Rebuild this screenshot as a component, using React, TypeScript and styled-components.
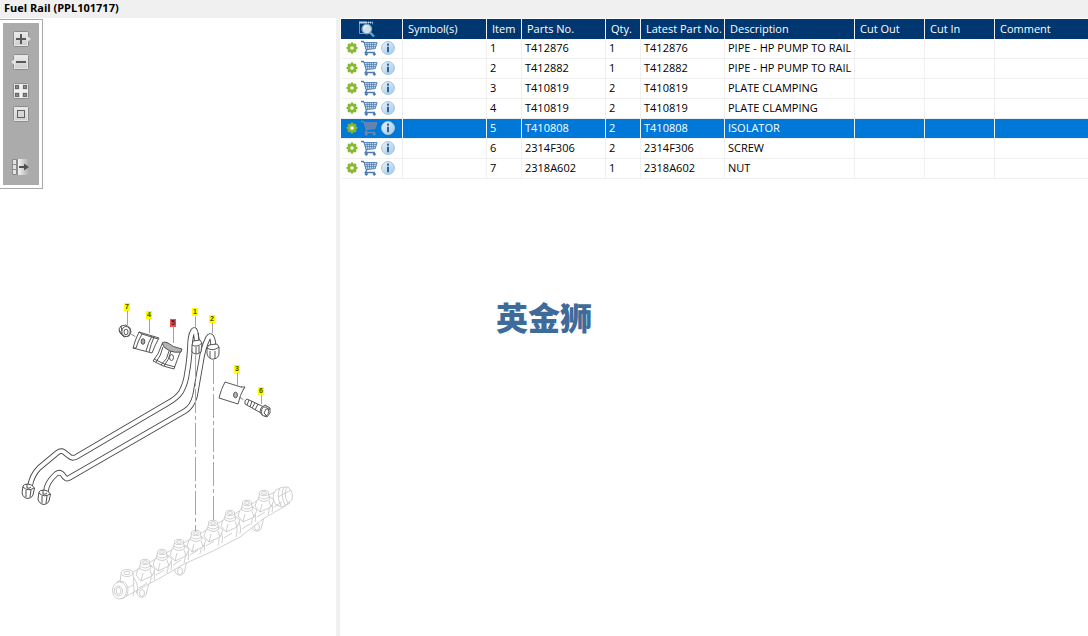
import React, { useState } from 'react';
import styled, { createGlobalStyle } from 'styled-components';

const GlobalStyle = createGlobalStyle`
  * { box-sizing: border-box; }
  body {
    margin: 0;
    background: #fff;
    color: #000;
    font: 11px/16px "Open Sans", "Noto Sans", sans-serif;
  }
`;

const Page = styled.div`
  position: relative;
  display: flex;
  flex-direction: column;
  min-height: 100vh;
`;

const TitleBar = styled.header`
  background: #f0f0f0;
  height: 18px;
  padding: 0 4px;
`;

const Title = styled.h1`
  margin: 0;
  font-size: 11px;
  line-height: 16px;
  font-weight: 700;
`;

const Workspace = styled.main`
  display: flex;
  flex: 1;
`;

const DrawingPane = styled.section`
  flex: 0 0 336px;
  padding-top: 1px;
`;

const Splitter = styled.div`
  flex: 0 0 4px;
  background: #f0f0f0;
`;

const PartsPane = styled.section`
  flex: 1;
  min-width: 0;
  padding: 1px 0 0 1px;
`;

const ToolFrame = styled.div`
  width: 43px;
  border: 1px solid #a9a9a9;
  border-left: 0;
  padding: 3px;
`;

const Tools = styled.div`
  display: flex;
  flex-direction: column;
  align-items: center;
  background: #ababab;
  padding: 6px 0 8px;
`;

const ToolButton = styled.button<{ $gap?: number }>`
  display: block;
  width: 20px;
  height: 20px;
  margin: ${(p) => p.$gap ?? 3}px 0 0;
  padding: 0;
  border: 0;
  background: none;
  svg { display: block; }
`;

const Drawing = styled.svg`
  display: block;
  width: 100%;
  margin-top: 109px;
`;

const Table = styled.table`
  width: 100%;
  table-layout: fixed;
  border-collapse: separate;
  border-spacing: 0;
`;

const Col = styled.col<{ $width?: number }>`
  width: ${(p) => (p.$width ? `${p.$width}px` : 'auto')};
`;

const HeadCell = styled.th`
  height: 20px;
  padding: 0 0 0 5px;
  border-right: 1px solid #f0f0f0;
  background: #003770;
  color: #fff;
  font-weight: 400;
  line-height: 16px;
  text-align: left;
  white-space: nowrap;
  svg { display: block; }
  &:first-child { padding: 0 0 0 17px; }
  &:last-child { border-right: 0; }
`;

const Row = styled.tr<{ $selected: boolean }>`
  background: ${(p) => (p.$selected ? '#0078d7' : '#fff')};
  color: ${(p) => (p.$selected ? '#fff' : '#000')};
`;

const Cell = styled.td`
  height: 20px;
  padding: 0 0 2px 3px;
  border-right: 1px solid #f0f0f0;
  border-bottom: 1px solid #f0f0f0;
  line-height: 16px;
  white-space: nowrap;
  &:first-child { padding-left: 5px; }
  &:last-child { border-right: 0; }
`;

const Actions = styled.div`
  display: flex;
  align-items: center;
  gap: 2px;
`;

const IconButton = styled.button`
  padding: 0;
  border: 0;
  background: none;
  svg { display: block; }
`;

const Watermark = styled.div`
  position: absolute;
  inset: 0;
  display: flex;
  align-items: center;
  justify-content: center;
  padding-bottom: 4px;
  color: #3f6b9b;
  font: 900 32px/32px "Noto Sans CJK SC", sans-serif;
  pointer-events: none;
`;

function ToolFace({ children }: { children: React.ReactNode }) {
  return (
    <svg width="20" height="20" viewBox="0 0 20 20">
      <defs>
        <linearGradient id="face" x1="0" y1="0" x2="0" y2="1">
          <stop offset="0" stopColor="#ececec" />
          <stop offset="1" stopColor="#cccccc" />
        </linearGradient>
      </defs>
      <rect x="2.5" y="2.5" width="15" height="15" rx="1" fill="url(#face)" stroke="#8c8c8c" />
      <rect x="3.5" y="3.5" width="13" height="13" fill="none" stroke="#e6e6e6" />
      {children}
    </svg>
  );
}

function GearIcon() {
  return (
    <svg width="12" height="12" viewBox="0 0 12 12">
      {[0, 45, 90, 135].map((a) => (
        <rect key={a} x="4.7" y="0.6" width="2.6" height="10.8" rx="0.5" fill="#7fb32a" transform={`rotate(${a} 6 6)`} />
      ))}
      <circle cx="6" cy="6" r="3" fill="none" stroke="#86ba2c" strokeWidth="2.2" />
      <circle cx="6" cy="6" r="1.8" fill="#fff" />
    </svg>
  );
}

function CartIcon({ selected }: { selected: boolean }) {
  const c = selected ? '#6c87ad' : '#4f7db0';
  return (
    <svg width="19" height="16" viewBox="0 0 19 16" fill="none" stroke={c}>
      <path d="M1 1.5h2.2l1.4 1.6 2 7.2-1.4 2.2H15" strokeWidth="1.3" />
      <path d="M4.2 2.6H17L15.2 8.6 6.2 9.6Z" fill={selected ? '#4c83c0' : '#d9e6f3'} />
      <path d="M4.9 4.6h11.4M5.5 6.6h10.2M7 2.6l.8 6.6M9.3 2.6l.4 6.4M11.6 2.6v6.2M13.8 2.6l-.5 6" strokeWidth="0.8" />
      <circle cx="6.3" cy="14.2" r="1.1" fill={c} />
      <circle cx="14.3" cy="14.2" r="1.1" fill={c} />
    </svg>
  );
}

function InfoIcon() {
  return (
    <svg width="14" height="14" viewBox="0 0 14 14">
      <defs>
        <linearGradient id="info" x1="0" y1="0" x2="1" y2="1">
          <stop offset="0" stopColor="#eaf3fa" />
          <stop offset="1" stopColor="#a3c8e4" />
        </linearGradient>
      </defs>
      <circle cx="7" cy="7" r="6.5" fill="url(#info)" stroke="#a5c5df" />
      <rect x="6" y="2.6" width="2" height="2" fill="#2f639f" />
      <path d="M6 5.8h2v5.4H6z" fill="#2f639f" />
    </svg>
  );
}

function FindIcon() {
  return (
    <svg width="18" height="18" viewBox="0 0 18 18">
      <path d="M1.5 13.5v-11h13v2" fill="none" stroke="#5d9fc4" />
      <path d="M1 2.5h13.5" stroke="#b5d9ec" strokeWidth="2" strokeDasharray="8 1 1 1 1 1" />
      <path d="M1.5 13.5h5" stroke="#5d9fc4" />
      <path d="M12 12.5l4 4" stroke="#6ba3c4" strokeWidth="2.4" />
      <circle cx="8.8" cy="9" r="4.8" fill="#d3dfe8" stroke="#6fa8c8" strokeWidth="1.2" />
      <path d="M6 8.5a3 3 0 0 1 3-2.7" stroke="#fff" fill="none" />
    </svg>
  );
}

const callouts = [
  { n: 7, x: 124, y: 303, to: 325 },
  { n: 4, x: 146, y: 311, to: 333 },
  { n: 5, x: 170, y: 319, to: 343, hot: true },
  { n: 1, x: 192, y: 308, to: 328 },
  { n: 2, x: 209, y: 315, to: 333 },
  { n: 3, x: 234, y: 365, to: 386 },
  { n: 6, x: 258, y: 387, to: 404 },
];

const pipes = [
  'M197 342L196 334Q195 328 193 331Q190 336 190 347Q189 363 187 373Q186 383 181 392Q177 398 168 403L76 457Q72 459 69 456L64 452Q61 450 57 453L39 468Q32 475 30 486',
  'M213 347V341Q211 333 208 338Q203 348 201 362L195 396Q192 407 185 411L69 478Q66 480 63 475Q60 471 56 474Q46 483 46 492',
];

const ports = [
  [145, 563], [162, 553], [179, 543], [196, 534], [213, 524], [230, 514], [247, 504], [264, 494],
];

function EndNut({ x, y }: { x: number; y: number }) {
  return (
    <g transform={`translate(${x} ${y})`} fill="#fff" stroke="#3a3a3a" strokeWidth="0.9">
      <path d="M-5-5L-6 2Q-5 7 0 7.5Q4 7 5 4L6.500-3Q4-7 0-7Q-4-7-5-5Z" />
      <path d="M-5-4Q0 1 6-3M-2-1L-2 6M3-1L2 6M-1-7V-3Q1-2 3-4" fill="none" />
    </g>
  );
}

function PartsDrawing() {
  return (
    <Drawing viewBox="0 298 336 310" role="img" aria-label="Fuel rail exploded view">
      <g fill="#fff" stroke="#c4c4c4" strokeWidth="0.8" strokeLinejoin="round">
        {[[142, 591], [180, 569], [257, 525]].map(([x, y]) => (
          <g key={x}>
            <path d={`M${x - 6} ${y - 6}L${x - 5} ${y + 3}Q${x - 1} ${y + 9} ${x + 4} ${y + 4}L${x + 7} ${y - 8}Z`} />
            <ellipse cx={x} cy={y + 2} rx="2.5" ry="3.5" />
          </g>
        ))}
        <path d="M121 599L160 578L184 564L211 552L240 537L263 519L290 503L284 488L262 498L236 513L210 528L180 545L140 568L117 582Z" />
        <path d="M276 490Q281 486 288 487Q294 492 292 500L283 507L276 505Q270 497 276 490Z" />
        <path d="M280 488Q276 495 281 506M284 487Q280 495 285 505M287 487Q283 494 288 503M291 490L278 497" fill="none" />
        {[[133, 596], [150, 583], [167, 573], [184, 563], [200, 554], [218, 546], [236, 537], [251, 525], [268, 515]].map(([x, y]) => (
          <path key={x} d={`M${x} ${y}Q${x + 3} ${y - 9} ${x - 2} ${y - 16}M${x + 4} ${y - 3}Q${x + 6} ${y - 11} ${x + 1} ${y - 18}M${x + 6} ${y - 8}l8-5`} fill="none" />
        ))}
        {ports.map(([x, y]) => (
          <g key={x}>
            <path d={`M${x - 7} ${y + 6}L${x - 9} ${y + 12}L${x - 4} ${y + 18}L${x + 7} ${y + 13}L${x + 10} ${y + 6}L${x + 5} ${y + 2}Z`} />
            <path d={`M${x - 4} ${y - 1}L${x - 6} ${y + 5}Q${x} ${y + 10} ${x + 6} ${y + 5}L${x + 4} ${y - 1}Z`} />
            <ellipse cx={x} cy={y - 1} rx="4.5" ry="2.7" />
            <ellipse cx={x} cy={y - 1} rx="2.5" ry="1.4" />
            <path d={`M${x - 5} ${y + 3}Q${x} ${y + 7} ${x + 5} ${y + 3}M${x - 4} ${y + 18}l2-8M${x + 7} ${y + 13}l-2-6`} fill="none" />
          </g>
        ))}
        <path d="M121 574L120 584Q127 591 134 584L133 573Z" />
        <ellipse cx="127" cy="573" rx="6" ry="3.5" />
        <ellipse cx="127" cy="573" rx="3" ry="1.7" />
        <ellipse cx="122" cy="590" rx="6" ry="8.5" />
        <ellipse cx="119.5" cy="590.5" rx="7" ry="8.5" />
        <ellipse cx="118.5" cy="591" rx="4.2" ry="5" />
        <path d="M116 589L119 587L121 590L120 594L117 594Z" />
      </g>

      {pipes.map((d) => (
        <g key={d} fill="none" strokeLinejoin="round">
          <path d={d} stroke="#484848" strokeWidth="5.6" />
          <path d={d} stroke="#fff" strokeWidth="3.8" />
        </g>
      ))}

      <g stroke="#a6a6a6" strokeWidth="1" strokeDasharray="24 3 4 3" fill="none">
        <path d="M195.5 355V531" />
        <path d="M213.5 360V521" />
      </g>

      <EndNut x={28} y={491} />
      <EndNut x={44} y={497} />

      <g fill="#fff" stroke="#444" strokeWidth="0.9" strokeLinejoin="round">
        <path d="M193 341L192 345V352Q196 356 201 352L202 343L200 340Z" />
        <path d="M192 345Q197 348 202 343M196 347V354M199 346V353M198 333L199 340" fill="none" />
        <path d="M209 345L207 348V354Q209 360 214 359Q219 358 219 353V347L217 344Z" />
        <path d="M207 348Q213 352 219 347M210 351V358M215 351V359" fill="none" />

        <path d="M119 329L121 326L126 325L130 328L131 332L129 336L124 337L120 333Z" />
        <ellipse cx="126" cy="331.5" rx="4.2" ry="5" />
        <ellipse cx="126" cy="332" rx="2" ry="2.8" />
        <path d="M121 326L122 331M119 330L122 334" />
        <path d="M131 334L141 340M239 397L246 401" stroke="#777" strokeDasharray="5 2" />

        <path d="M139 332L159 338Q155 345 152 353L133 348Q135 340 139 332Z" />
        <path d="M142 334Q138 341 136 348L133 348M152 336Q148 343 146 351M154 337Q151 344 149 352M139 332L142 334L158 339" fill="none" />
        <ellipse cx="143" cy="341.5" rx="1.8" ry="2.8" fill="#aaa" />

        <path d="M162 344Q159 354 153 361Q163 367 174 369Q177 360 181 350Z" />
        <path d="M162 343Q164 341 168 343Q172 347 182 349L181 352Q175 353 170 351Q163 348 162 343Z" fill="#b4b4b4" />
        <path d="M163 347Q161 356 156 362M169 351Q168 359 161 365M171 351Q169 360 164 366M154 359Q164 365 175 367" fill="none" />
        <ellipse cx="171.5" cy="357.5" rx="2" ry="3" />

        <path d="M225 382L244 388Q240 395 238 404L219 398Q221 389 225 382Z" />
        <path d="M241 387L245 387L243 390" />
        <ellipse cx="235.5" cy="395" rx="1.9" ry="2.8" fill="#bbb" />

        <path d="M247 399L264 407L261 413L245 404Q244 400 247 399Z" />
        <path d="M249 400L247 405M252 401L250 407M255 403L252 408M258 404L255 410" />
        <path d="M261 408L265 405L270 408V413L267 417L262 415L260 412Z" />
        <ellipse cx="265" cy="411.5" rx="3.5" ry="4.5" />
        <path d="M266 409L270 409M266 409L264 413L267 416" />
      </g>

      {callouts.map((c) => (
        <g key={c.n}>
          <path d={`M${c.x + 3.5} ${c.y + 8}V${c.to}`} stroke="#999" strokeWidth="0.9" />
          <rect x={c.x} y={c.y} width="6" height="8" fill={c.hot ? '#f05050' : '#ffff00'} />
          <text x={c.x + 3} y={c.y + 6} textAnchor="middle" fontSize="7" fontWeight="700" fill={c.hot ? '#5a1010' : '#4a4a00'} fontFamily="Liberation Sans, sans-serif">
            {c.n}
          </text>
        </g>
      ))}
    </Drawing>
  );
}

const columns = [
  { label: 'Symbol(s)', width: 84 },
  { label: 'Item', width: 35 },
  { label: 'Parts No.', width: 84 },
  { label: 'Qty.', width: 35 },
  { label: 'Latest Part No.', width: 84 },
  { label: 'Description', width: 130 },
  { label: 'Cut Out', width: 70 },
  { label: 'Cut In', width: 70 },
  { label: 'Comment' },
];

const parts = [
  { item: 1, no: 'T412876', qty: 1, description: 'PIPE - HP PUMP TO RAIL' },
  { item: 2, no: 'T412882', qty: 1, description: 'PIPE - HP PUMP TO RAIL' },
  { item: 3, no: 'T410819', qty: 2, description: 'PLATE CLAMPING' },
  { item: 4, no: 'T410819', qty: 2, description: 'PLATE CLAMPING' },
  { item: 5, no: 'T410808', qty: 2, description: 'ISOLATOR' },
  { item: 6, no: '2314F306', qty: 2, description: 'SCREW' },
  { item: 7, no: '2318A602', qty: 1, description: 'NUT' },
];

export default function App() {
  const [selected, setSelected] = useState(5);
  return (
    <Page>
      <GlobalStyle />
      <TitleBar>
        <Title>Fuel Rail (PPL101717)</Title>
      </TitleBar>
      <Workspace>
        <DrawingPane>
          <ToolFrame>
            <Tools>
              <ToolButton $gap={0} aria-label="Zoom in">
                <ToolFace>
                  <path d="M17 7.5L20 10L17 12.5Z" fill="#dedede" />
                  <path d="M10 5v10M5 10h10" stroke="#595959" strokeWidth="2" />
                </ToolFace>
              </ToolButton>
              <ToolButton aria-label="Zoom out">
                <ToolFace>
                  <path d="M3 7.5L0 10L3 12.5Z" fill="#dedede" />
                  <path d="M5 10h10" stroke="#595959" strokeWidth="2" />
                </ToolFace>
              </ToolButton>
              <ToolButton $gap={9} aria-label="Fit to window">
                <ToolFace>
                  <path d="M10 3v14M3 10h14" stroke="#f2f2f2" strokeWidth="2" />
                  {[[4.5, 4.5], [12.5, 4.5], [4.5, 12.5], [12.5, 12.5]].map(([x, y]) => (
                    <rect key={`${x}-${y}`} x={x} y={y} width="3" height="3" fill="#8a8a8a" stroke="#666" />
                  ))}
                </ToolFace>
              </ToolButton>
              <ToolButton aria-label="Actual size">
                <ToolFace>
                  <rect x="6.5" y="6.5" width="7" height="7" fill="#d6d6d6" stroke="#606060" />
                </ToolFace>
              </ToolButton>
              <ToolButton $gap={33} aria-label="Show list">
                <svg width="20" height="20" viewBox="0 0 20 20">
                  <defs>
                    <linearGradient id="fade">
                      <stop offset="0" stopColor="#f4f4f4" />
                      <stop offset="1" stopColor="#ababab" />
                    </linearGradient>
                  </defs>
                  <rect x="7" y="2" width="11" height="16" fill="url(#fade)" />
                  <path d="M1.5 2.5h4v5h-4zM1.5 7.5h4v5h-4zM1.5 12.5h4v5h-4z" fill="#e4e4e4" stroke="#8a8a8a" />
                  <path d="M6.5 2v16" stroke="#8a8a8a" />
                  <path d="M8 10h6" stroke="#505050" strokeWidth="2" />
                  <path d="M13 6.5L18 10L13 13.5Z" fill="#505050" />
                </svg>
              </ToolButton>
            </Tools>
          </ToolFrame>
          <PartsDrawing />
        </DrawingPane>
        <Splitter />
        <PartsPane>
          <Table>
            <colgroup>
              <Col $width={62} />
              {columns.map((c) => (
                <Col key={c.label} $width={c.width} />
              ))}
            </colgroup>
            <thead>
              <tr>
                <HeadCell aria-label="Actions"><FindIcon /></HeadCell>
                {columns.map((c) => (
                  <HeadCell key={c.label}>{c.label}</HeadCell>
                ))}
              </tr>
            </thead>
            <tbody>
              {parts.map((p) => (
                <Row key={p.item} $selected={p.item === selected} onClick={() => setSelected(p.item)}>
                  <Cell>
                    <Actions>
                      <IconButton aria-label="Configure"><GearIcon /></IconButton>
                      <IconButton aria-label="Add to cart"><CartIcon selected={p.item === selected} /></IconButton>
                      <IconButton aria-label="Part information"><InfoIcon /></IconButton>
                    </Actions>
                  </Cell>
                  <Cell />
                  <Cell>{p.item}</Cell>
                  <Cell>{p.no}</Cell>
                  <Cell>{p.qty}</Cell>
                  <Cell>{p.no}</Cell>
                  <Cell>{p.description}</Cell>
                  <Cell />
                  <Cell />
                  <Cell />
                </Row>
              ))}
            </tbody>
          </Table>
        </PartsPane>
      </Workspace>
      <Watermark>英金狮</Watermark>
    </Page>
  );
}
